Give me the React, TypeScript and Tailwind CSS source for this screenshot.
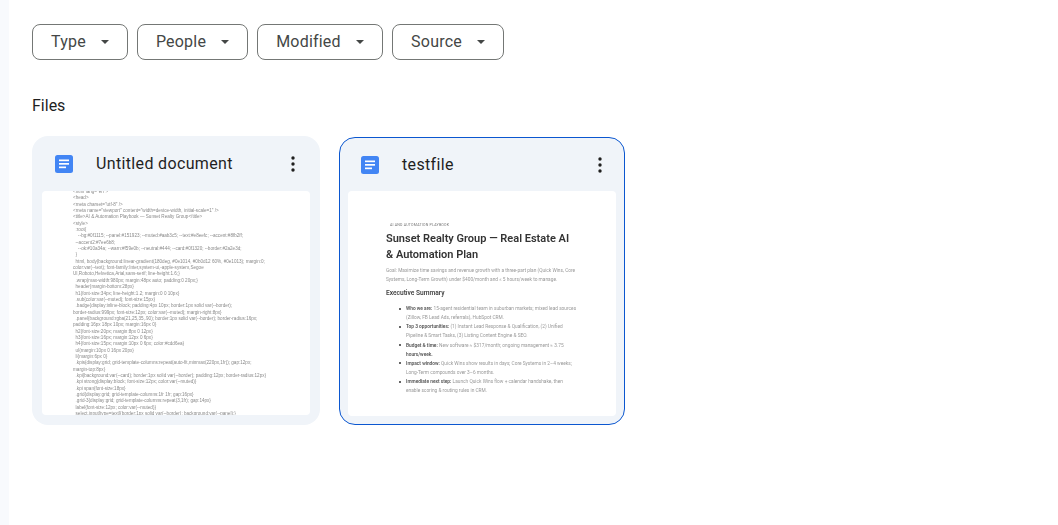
import React from 'react';

const filters = [
  { label: 'Type', width: 'w-[96px]' },
  { label: 'People', width: 'w-[111px]' },
  { label: 'Modified', width: 'w-[126px]' },
  { label: 'Source', width: 'w-[112px]' },
];

const codeLines = [
  '<html lang="en">',
  '<head>',
  '<meta charset="utf-8" />',
  '<meta name="viewport" content="width=device-width, initial-scale=1" />',
  '<title>AI & Automation Playbook — Sunset Realty Group</title>',
  '<style>',
  '  :root{',
  '    --bg:#0f1115; --panel:#151923; --muted:#aab3c5; --text:#e8eefc; --accent:#8fb2ff;',
  '  --accent2:#7ee6b8;',
  '    --ok:#10a34a; --warn:#f59e0b; --neutral:#444; --card:#0f1320; --border:#2a2e3d;',
  '  }',
  '  html, body{background:linear-gradient(180deg, #0e1014, #0b0d12 60%, #0e1013); margin:0;',
  'color:var(--text); font-family:Inter,system-ui,-apple-system,Segoe',
  'UI,Roboto,Helvetica,Arial,sans-serif; line-height:1.6;}',
  '  .wrap{max-width:980px; margin:48px auto; padding:0 20px;}',
  '  header{margin-bottom:28px}',
  '  h1{font-size:34px; line-height:1.2; margin:0 0 10px}',
  '  .sub{color:var(--muted); font-size:15px}',
  '  .badge{display:inline-block; padding:4px 10px; border:1px solid var(--border);',
  'border-radius:999px; font-size:12px; color:var(--muted); margin-right:8px}',
  '  .panel{background:rgba(21,25,35,.90); border:1px solid var(--border); border-radius:16px;',
  'padding:16px 18px 10px; margin:16px 0}',
  '  h2{font-size:20px; margin:8px 0 12px}',
  '  h3{font-size:16px; margin:12px 0 6px}',
  '  h4{font-size:15px; margin:10px 0 6px; color:#cdd6ea}',
  '  ul{margin:10px 0 16px 20px}',
  '  li{margin:6px 0}',
  '  .kpis{display:grid; grid-template-columns:repeat(auto-fit,minmax(220px,1fr)); gap:12px;',
  'margin-top:8px}',
  '  .kpi{background:var(--card); border:1px solid var(--border); padding:12px; border-radius:12px}',
  '  .kpi strong{display:block; font-size:12px; color:var(--muted)}',
  '  .kpi span{font-size:18px}',
  '  .grid{display:grid; grid-template-columns:1fr 1fr; gap:16px}',
  '  .grid-3{display:grid; grid-template-columns:repeat(3,1fr); gap:14px}',
  '  label{font-size:12px; color:var(--muted)}',
  '  select,input[type=text]{border:1px solid var(--border); background:var(--panel);}',
];

const bullets = [
  { lead: 'Who we are:', lines: ['15-agent residential team in suburban markets; mixed lead sources', '(Zillow, FB Lead Ads, referrals), HubSpot CRM.'] },
  { lead: 'Top 3 opportunities:', lines: ['(1) Instant Lead Response & Qualification, (2) Unified', 'Pipeline & Smart Tasks, (3) Listing Content Engine & SEO.'] },
  { lead: 'Budget & time:', lines: ['New software ≈ $317/month; ongoing management ≈ 3.75', 'hours/week.'], boldWrap: true },
  { lead: 'Impact window:', lines: ['Quick Wins show results in days; Core Systems in 2–4 weeks;', 'Long-Term compounds over 3–6 months.'] },
  { lead: 'Immediate next step:', lines: ['Launch Quick Wins flow + calendar handshake, then', 'enable scoring & routing rules in CRM.'] },
];

function DocIcon() {
  return (
    <svg width="18" height="18" viewBox="0 0 18 18" className="shrink-0">
      <rect width="18" height="18" rx="2.5" fill="#4285f4" />
      <rect x="4" y="4.5" width="10" height="1.7" fill="#fff" />
      <rect x="4" y="8" width="10" height="1.7" fill="#fff" />
      <rect x="4" y="11.5" width="7" height="1.7" fill="#fff" />
    </svg>
  );
}

function Card({
  name,
  selected,
  children,
}: {
  name: string;
  selected?: boolean;
  children: React.ReactNode;
}) {
  return (
    <div
      className={
        selected
          ? 'flex h-[288px] w-[286px] flex-col rounded-2xl border border-[#0b57d0] bg-[#f0f4f9] px-[8px] pb-[8px]'
          : 'flex h-[289px] w-[288px] flex-col rounded-2xl bg-[#f0f4f9] px-[10px] pb-[10px]'
      }
    >
      <div className={selected ? 'flex h-[53px] shrink-0 items-center pl-[13px] pr-[14px]' : 'flex h-[55px] shrink-0 items-center pl-[13px] pr-[15px]'}>
        <DocIcon />
        <span className="ml-[23px] flex-1 text-[16px] tracking-[0.35px] text-[#1f1f1f]">{name}</span>
        <svg width="4" height="16" viewBox="0 0 4 16" fill="#1f1f1f">
          <circle cx="2" cy="2" r="1.7" />
          <circle cx="2" cy="8" r="1.7" />
          <circle cx="2" cy="14" r="1.7" />
        </svg>
      </div>
      <div className="flex-1 overflow-hidden rounded-[4px] bg-white">{children}</div>
    </div>
  );
}

export default function App() {
  return (
    <div className="flex h-[525px] w-[1058px] overflow-hidden bg-white font-['Roboto',sans-serif]">
      <div className="w-[9px] shrink-0 bg-[#f8fafd]" />
      <main className="flex-1 pl-[23px] pt-[24px]">
        <div className="flex gap-[9px]">
          {filters.map((f) => (
            <button
              key={f.label}
              className={`flex h-[36px] ${f.width} items-center justify-center gap-[15px] rounded-lg border border-[#747775] text-[16px] tracking-[0.2px] text-[#444746]`}
            >
              {f.label}
              <span className="h-0 w-0 border-x-[4px] border-t-[4px] border-x-transparent border-t-[#444746]" />
            </button>
          ))}
        </div>

        <h2 className="mt-[36px] text-[16px] font-normal leading-[20px] text-[#1f1f1f]">Files</h2>

        <div className="mt-[20px] flex items-start gap-[19px]">
          <Card name="Untitled document">
            <div className="-mt-[2px] pl-[31px] font-['Liberation_Sans',sans-serif] text-[4.6px] leading-[6.35px] text-[#8a8a8a] blur-[0.3px]">
              {codeLines.map((l, i) => (
                <div key={i} className="whitespace-pre">{l}</div>
              ))}
            </div>
          </Card>
          <div className="pt-px">
            <Card name="testfile" selected>
              <div className="pl-[38px] pt-[31px] text-[#333] blur-[0.3px]">
                <div className="pl-[4px] text-[3.6px] leading-[6px] tracking-[0.2px] text-[#777]">AI AND AUTOMATION PLAYBOOK</div>
                <div className="mt-[3px] text-[11px] font-semibold leading-[16px]">
                  Sunset Realty Group — Real Estate AI
                  <br />& Automation Plan
                </div>
                <div className="mt-[3px] text-[4.8px] leading-[9px] text-[#999]">
                  Goal: Maximize time savings and revenue growth with a three-part plan (Quick Wins, Core
                  <br />
                  Systems, Long-Term Growth) under $400/month and ≤ 5 hours/week to manage.
                </div>
                <div className="mt-[5px] text-[6.6px] font-semibold leading-[9px] text-[#444]">Executive Summary</div>
                <ul className="mt-[6px] text-[4.8px] leading-[9.15px] text-[#999]">
                  {bullets.map((b) => (
                    <li key={b.lead} className="relative pl-[20px]">
                      <span className="absolute left-[13px] top-[3.5px] h-[2px] w-[2px] rounded-full bg-[#333]" />
                      <span className="font-semibold text-[#555]">{b.lead}</span> {b.lines[0]}
                      <br />
                      {b.boldWrap ? <span className="font-semibold text-[#555]">{b.lines[1]}</span> : b.lines[1]}
                    </li>
                  ))}
                </ul>
              </div>
            </Card>
          </div>
        </div>
      </main>
    </div>
  );
}
